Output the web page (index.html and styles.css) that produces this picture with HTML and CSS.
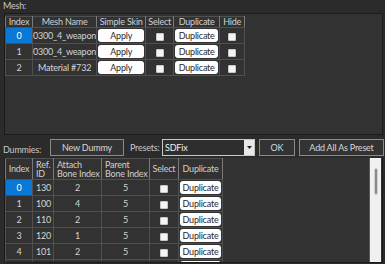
FILE: index.html
```html
<!DOCTYPE html>
<html>
<head>
<meta charset="utf-8">
<link rel="stylesheet" href="styles.css">
</head>
<body>
<div class="label mesh-label">Mesh:</div>
<div class="panel mesh-panel">
  <table class="grid mesh-grid">
    <colgroup>
      <col class="c-idx"><col class="c-name"><col class="c-skin"><col class="c-sel"><col class="c-dup"><col class="c-hide">
    </colgroup>
    <tr class="head">
      <th>Index</th><th>Mesh Name</th><th>Simple Skin</th><th>Select</th><th>Duplicate</th><th>Hide</th>
    </tr>
    <tr>
      <td class="sel-idx">0</td><td>0300_4_weapon</td><td><span class="btn">Apply</span></td><td><span class="chk"></span></td><td><span class="btn">Duplicate</span></td><td><span class="chk"></span></td>
    </tr>
    <tr>
      <td>1</td><td>0300_4_weapon</td><td><span class="btn">Apply</span></td><td><span class="chk"></span></td><td><span class="btn">Duplicate</span></td><td><span class="chk"></span></td>
    </tr>
    <tr>
      <td>2</td><td>Material #732</td><td><span class="btn">Apply</span></td><td><span class="chk"></span></td><td><span class="btn">Duplicate</span></td><td><span class="chk"></span></td>
    </tr>
  </table>
</div>
<div class="bar">
  <span class="label dummies-label">Dummies:</span>
  <span class="dbtn new-dummy">New Dummy</span>
  <span class="label presets-label">Presets:</span>
  <span class="combo"><span class="combo-text">SDFix</span><span class="combo-arrow"><svg width="5" height="3" viewBox="0 0 5 3"><path d="M0 0H5L2.5 3Z" fill="#222"/></svg></span></span>
  <span class="dbtn ok">OK</span>
  <span class="dbtn add-all">Add All As Preset</span>
</div>
<div class="panel dummies-panel">
  <div class="dummies-scroll">
    <table class="grid dummy-grid">
      <colgroup>
        <col class="d-idx"><col class="d-ref"><col class="d-att"><col class="d-par"><col class="d-sel"><col class="d-dup">
      </colgroup>
      <tr class="head2">
        <th>Index</th><th class="left">Ref.<br>ID</th><th class="left">Attach<br>Bone Index</th><th class="left">Parent<br>Bone Index</th><th>Select</th><th>Duplicate</th>
      </tr>
      <tr><td class="sel-idx">0</td><td class="left">130</td><td>2</td><td>5</td><td><span class="chk"></span></td><td><span class="btn">Duplicate</span></td></tr>
      <tr><td>1</td><td class="left">100</td><td>4</td><td>5</td><td><span class="chk"></span></td><td><span class="btn">Duplicate</span></td></tr>
      <tr><td>2</td><td class="left">110</td><td>2</td><td>5</td><td><span class="chk"></span></td><td><span class="btn">Duplicate</span></td></tr>
      <tr><td>3</td><td class="left">120</td><td>1</td><td>5</td><td><span class="chk"></span></td><td><span class="btn">Duplicate</span></td></tr>
      <tr><td>4</td><td class="left">101</td><td>2</td><td>5</td><td><span class="chk"></span></td><td><span class="btn">Duplicate</span></td></tr>
      <tr class="partial"><td></td><td></td><td></td><td></td><td><span class="chk"></span></td><td><span class="btn"></span></td></tr>
    </table>
  </div>
  <div class="scrollbar"><div class="thumb"></div></div>
</div>
</body>
</html>
```
FILE: styles.css
```css
html, body {
  margin: 0;
  padding: 0;
}
body {
  width: 385px;
  height: 264px;
  overflow: hidden;
  background: #2b2b2b;
  font-family: Lato, "Open Sans", sans-serif;
  font-size: 9px;
  letter-spacing: -0.2px;
  color: #d4d4d4;
}
.label {
  color: #c8c8c8;
}
.mesh-label {
  height: 13px;
  line-height: 11px;
  padding-left: 3px;
}
.panel {
  background: #323232;
  border: 1px solid #1b1b1b;
}
.mesh-panel {
  margin-left: 4px;
  width: 377px;
  height: 118px;
  padding-top: 2px;
}
.grid {
  border-collapse: collapse;
  table-layout: fixed;
  margin-left: 0;
}
.grid th, .grid td {
  border: 1px solid #505050;
  padding: 0;
  text-align: center;
  white-space: nowrap;
  overflow: hidden;
  font-weight: normal;
}
.grid th {
  color: #d0d0d0;
  border-left-color: #7a7a7a;
  border-right-color: #7a7a7a;
}
.grid th.left, .grid td.left {
  text-align: left;
  padding-left: 3px;
}
.mesh-grid .head {
  height: 11px;
  line-height: 10px;
}
.mesh-grid tr {
  height: 16px;
}
.mesh-grid .head th {
  height: 10px;
}
.c-idx { width: 27px; }
.c-name { width: 59px; }
.c-skin { width: 49px; }
.c-sel { width: 28px; }
.c-dup { width: 46px; }
.c-hide { width: 25px; }
.sel-idx {
  background: #0a78d7;
  color: #fff;
}
.btn {
  display: block;
  margin: 0 1px;
  height: 13px;
  line-height: 13px;
  background: #fdfdfd;
  border-radius: 3px;
  color: #2a2a2a;
  text-align: center;
}
.chk {
  display: inline-block;
  width: 8px;
  height: 8px;
  background: #f4f4f4;
  border: 1px solid #c8c8c8;
  border-radius: 1px;
  vertical-align: middle;
  box-sizing: border-box;
}
.bar {
  display: flex;
  align-items: center;
  height: 22px;
  margin-top: 1px;
}
.dummies-label {
  margin-left: 3px;
  width: 47px;
  position: relative;
  top: 2px;
}
.dbtn {
  box-sizing: border-box;
  height: 17px;
  line-height: 15px;
  border: 1px solid #8a8a8a;
  background: #333;
  color: #d8d8d8;
  text-align: center;
}
.new-dummy {
  width: 74px;
}
.presets-label {
  margin-left: 6px;
  width: 32px;
}
.combo {
  box-sizing: border-box;
  display: flex;
  width: 93px;
  height: 17px;
  border: 1px solid #c8c8c8;
  background: #2e2e2e;
}
.combo-text {
  flex: 1;
  color: #f0f0f0;
  line-height: 15px;
  padding-left: 2px;
}
.combo-arrow {
  width: 10px;
  background: #e8e8e8;
  display: flex;
  align-items: center;
  justify-content: center;
}
.ok {
  margin-left: 4px;
  width: 36px;
}
.add-all {
  margin-left: 4px;
  width: 85px;
}
.dummies-panel {
  margin-left: 4px;
  width: 377px;
  height: 104px;
  border-top: none;
  display: flex;
  overflow: hidden;
}
.dummies-scroll {
  flex: 1;
  overflow: hidden;
}
.dummy-grid .head2 {
  height: 21px;
  line-height: 9.5px;
}
.dummy-grid tr {
  height: 16px;
}
.d-idx { width: 27px; }
.d-ref { width: 21px; }
.d-att { width: 48px; }
.d-par { width: 48px; }
.d-sel { width: 29px; }
.d-dup { width: 44px; }
.scrollbar {
  width: 11px;
  margin-right: 1px;
  background: #f0f0f0;
  border-left: 1px solid #5a5a5a;
  display: flex;
  justify-content: center;
}
.thumb {
  width: 2px;
  height: 25px;
  margin-top: 10px;
  background: #8a8a8a;
  border: 1px solid #d0d0d0;
  border-radius: 2px;
}
```
